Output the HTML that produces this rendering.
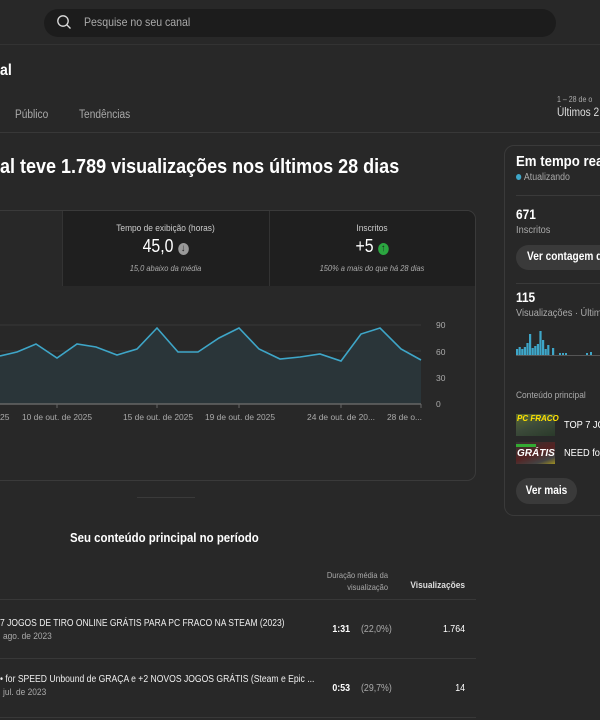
<!DOCTYPE html>
<html><head><meta charset="utf-8"><style>
*{margin:0;padding:0;box-sizing:border-box}
body{width:600px;height:720px;overflow:hidden;background:#282828;font-family:"Liberation Sans",sans-serif;color:#fff;position:relative}
.a{position:absolute;white-space:nowrap}
.g{color:#aaa}
.n{transform:scaleX(.88);transform-origin:left center}
.nc{transform:scaleX(.88);transform-origin:center}
.nr{transform:scaleX(.88);transform-origin:right center}
</style></head><body>
<div class="a" style="left:0;top:0;width:600px;height:45px;background:#282828;border-bottom:1px solid #333"></div>
<div class="a" style="left:44px;top:9px;width:512px;height:28px;border-radius:14px;background:#1c1c1c"></div>
<svg class="a" style="left:56px;top:14px" width="16" height="16" viewBox="0 0 16 16"><circle cx="7" cy="7" r="5.2" fill="none" stroke="#ddd" stroke-width="1.3"/><line x1="11" y1="11" x2="14.5" y2="14.5" stroke="#ddd" stroke-width="1.3"/></svg>
<div class="a g n" style="left:84px;top:15px;font-size:12px">Pesquise no seu canal</div>

<div class="a n" style="left:0;top:62px;font-size:16px;font-weight:bold">al</div>
<div class="a g n" style="left:15px;top:109px;font-size:11.5px">Público</div>
<div class="a g n" style="left:79px;top:109px;font-size:11.5px">Tendências</div>
<div class="a g n" style="left:557px;top:95px;font-size:8px">1 – 28 de o</div>
<div class="a n" style="left:557px;top:107px;font-size:11.5px;color:#ddd">Últimos 2</div>
<div class="a" style="left:0;top:132px;width:600px;height:1px;background:#383838"></div>

<div class="a n" style="left:0;top:156px;font-size:20px;font-weight:bold;transform:scaleX(.90)">al teve 1.789 visualizações nos últimos 28 dias</div>

<div class="a" style="left:-10px;top:210px;width:486px;height:271px;border:1px solid #3a3a3a;border-radius:9px"></div>
<div class="a" style="left:62px;top:211px;width:413px;height:75px;background:#1f1f1f;border-top-right-radius:8px"></div>
<div class="a" style="left:62px;top:211px;width:1px;height:75px;background:#333"></div>
<div class="a" style="left:269px;top:211px;width:1px;height:75px;background:#333"></div>
<div class="a nc" style="left:62px;top:223px;width:207px;text-align:center;font-size:9.5px;color:#ccc">Tempo de exibição (horas)</div>
<div class="a nc" style="left:62px;top:236px;width:207px;text-align:center;font-size:18px">45,0 <span style="display:inline-block;width:12px;height:12px;border-radius:50%;background:#999;color:#1f1f1f;font-size:10px;line-height:12px;vertical-align:1px;font-weight:bold">↓</span></div>
<div class="a nc" style="left:62px;top:263px;width:207px;text-align:center;font-size:8.5px;font-style:italic;color:#aaa">15,0 abaixo da média</div>
<div class="a nc" style="left:269px;top:223px;width:206px;text-align:center;font-size:9.5px;color:#ccc">Inscritos</div>
<div class="a nc" style="left:269px;top:236px;width:206px;text-align:center;font-size:18px">+5 <span style="display:inline-block;width:12px;height:12px;border-radius:50%;background:#2ba640;color:#1f1f1f;font-size:10px;line-height:12px;vertical-align:1px;font-weight:bold">↑</span></div>
<div class="a nc" style="left:269px;top:263px;width:206px;text-align:center;font-size:8.5px;font-style:italic;color:#aaa">150% a mais do que há 28 dias</div>

<svg class="a" style="left:0;top:300px" width="475" height="130" viewBox="0 300 475 130">
<line x1="0" y1="325" x2="421" y2="325" stroke="#383838"/>
<line x1="0" y1="351" x2="421" y2="351" stroke="#383838"/>
<line x1="0" y1="378" x2="421" y2="378" stroke="#383838"/>
<polygon fill="#2a3539" points="0,404 0,356 17,352 36,344 57,358 77,344 96,347 117,355 137,349 157,328 178,352 198,352 219,338 239,328 259,349 280,359 300,357 320,354 341,361 361,334 380,328 401,349 421,360 421,404"/>
<polyline fill="none" stroke="#3ea6c8" stroke-width="1.6" points="0,356 17,352 36,344 57,358 77,344 96,347 117,355 137,349 157,328 178,352 198,352 219,338 239,328 259,349 280,359 300,357 320,354 341,361 361,334 380,328 401,349 421,360"/>
<line x1="0" y1="404" x2="421" y2="404" stroke="#666" stroke-width="1.5"/>
<g stroke="#666"><line x1="57" y1="404" x2="57" y2="408"/><line x1="157" y1="404" x2="157" y2="408"/><line x1="239" y1="404" x2="239" y2="408"/><line x1="341" y1="404" x2="341" y2="408"/><line x1="421" y1="404" x2="421" y2="408"/></g>
<g fill="#aaa" font-size="8.5" font-family="Liberation Sans"><text x="436" y="328">90</text><text x="436" y="355">60</text><text x="436" y="381">30</text><text x="436" y="407">0</text>
<text x="0" y="420">25</text><text x="22" y="420" textLength="70" lengthAdjust="spacingAndGlyphs">10 de out. de 2025</text><text x="123" y="420" textLength="70" lengthAdjust="spacingAndGlyphs">15 de out. de 2025</text><text x="205" y="420" textLength="70" lengthAdjust="spacingAndGlyphs">19 de out. de 2025</text><text x="307" y="420" textLength="68" lengthAdjust="spacingAndGlyphs">24 de out. de 20...</text><text x="387" y="420" textLength="35" lengthAdjust="spacingAndGlyphs">28 de o...</text></g>
</svg>
<div class="a" style="left:137px;top:497px;width:58px;height:1px;background:#3a3a3a"></div>

<div class="a n" style="left:70px;top:530px;font-size:13px;font-weight:bold">Seu conteúdo principal no período</div>
<div class="a g nr" style="left:300px;top:569px;width:88px;text-align:right;font-size:8.5px;line-height:12px;white-space:normal">Duração média da visualização</div>
<div class="a nr" style="left:395px;top:580px;width:70px;text-align:right;font-size:9.5px;font-weight:bold;color:#ddd">Visualizações</div>
<div class="a" style="left:0;top:599px;width:476px;height:1px;background:#383838"></div>
<div class="a n" style="left:0;top:618px;font-size:10px;color:#eee;transform:scaleX(.85)">7 JOGOS DE TIRO ONLINE GRÁTIS PARA PC FRACO NA STEAM (2023)</div>
<div class="a g n" style="left:3px;top:631px;font-size:9.5px">ago. de 2023</div>
<div class="a nr" style="left:300px;top:624px;width:50px;text-align:right;font-size:10px;font-weight:bold">1:31</div>
<div class="a g n" style="left:361px;top:624px;font-size:10px">(22,0%)</div>
<div class="a nr" style="left:400px;top:624px;width:65px;text-align:right;font-size:10px">1.764</div>
<div class="a" style="left:0;top:658px;width:476px;height:1px;background:#383838"></div>
<div class="a n" style="left:0;top:674px;font-size:10px;color:#eee;transform:scaleX(.86)">&#8226; for SPEED Unbound de GRAÇA e +2 NOVOS JOGOS GRÁTIS (Steam e Epic ...</div>
<div class="a g n" style="left:3px;top:687px;font-size:9.5px">jul. de 2023</div>
<div class="a nr" style="left:300px;top:683px;width:50px;text-align:right;font-size:10px;font-weight:bold">0:53</div>
<div class="a g n" style="left:361px;top:683px;font-size:10px">(29,7%)</div>
<div class="a nr" style="left:400px;top:683px;width:65px;text-align:right;font-size:10px">14</div>
<div class="a" style="left:0;top:717px;width:476px;height:1px;background:#383838"></div>

<div class="a" style="left:504px;top:145px;width:120px;height:371px;border:1px solid #3a3a3a;border-radius:10px"></div>
<div class="a n" style="left:516px;top:153px;font-size:15px;font-weight:bold">Em tempo real</div>
<div class="a g n" style="left:516px;top:172px;font-size:10px"><span style="display:inline-block;width:6px;height:6px;border-radius:50%;background:#3ea6c8;margin-right:3px"></span>Atualizando</div>
<div class="a" style="left:516px;top:195px;width:90px;height:1px;background:#3a3a3a"></div>
<div class="a n" style="left:516px;top:207px;font-size:13.5px;font-weight:bold">671</div>
<div class="a g n" style="left:516px;top:224px;font-size:10.5px">Inscritos</div>
<div class="a" style="left:516px;top:245px;width:100px;height:25px;border-radius:13px;background:#3a3a3a"></div>
<div class="a n" style="left:527px;top:251px;font-size:11.5px;font-weight:bold">Ver contagem de</div>
<div class="a" style="left:516px;top:283px;width:90px;height:1px;background:#3a3a3a"></div>
<div class="a n" style="left:516px;top:290px;font-size:13.5px;font-weight:bold">115</div>
<div class="a g n" style="left:516px;top:307px;font-size:10.5px">Visualizações · Últim</div>
<svg class="a" style="left:516px;top:320px" width="84" height="36"><g fill="#3ea6c8">
<rect x="0" y="29" width="2.2" height="6"/><rect x="2.6" y="27" width="2.2" height="8"/><rect x="5.2" y="29" width="2.2" height="6"/><rect x="7.8" y="27" width="2.2" height="8"/><rect x="10.4" y="23" width="2.2" height="12"/><rect x="13" y="14" width="2.2" height="21"/><rect x="15.6" y="28" width="2.2" height="7"/><rect x="18.2" y="26" width="2.2" height="9"/><rect x="20.8" y="24" width="2.2" height="11"/><rect x="23.4" y="11" width="2.2" height="24"/><rect x="26" y="20" width="2.2" height="15"/><rect x="28.6" y="29" width="2.2" height="6"/><rect x="31.2" y="25" width="2.2" height="10"/><rect x="36" y="28" width="2.2" height="7"/><rect x="43" y="33" width="2" height="2"/><rect x="46" y="33" width="2" height="2"/><rect x="49" y="33" width="2" height="2"/><rect x="70" y="33" width="2" height="2"/><rect x="74" y="32" width="2" height="3"/></g><rect x="0" y="35" width="84" height="1" fill="#555"/></svg>
<div class="a g n" style="left:516px;top:390px;font-size:9.5px">Conteúdo principal</div>
<div class="a" style="left:516px;top:414px;width:39px;height:22px;background:linear-gradient(160deg,#5a6a30,#3c4a3a 50%,#2a3a2a)"><div style="font-size:8px;font-weight:bold;font-style:italic;color:#ffe000;padding-left:1px;line-height:9px">PC FRACO</div></div>
<div class="a n" style="left:564px;top:419px;font-size:10.5px">TOP 7 JO</div>
<div class="a" style="left:516px;top:442px;width:39px;height:22px;background:linear-gradient(160deg,#333,#552222 50%,#444 80%,#a09020)"><div style="height:3px;background:#3a3;width:20px;margin-top:2px"></div><div style="font-size:10px;font-weight:bold;font-style:italic;color:#fff;padding:2px 0 0 1px;line-height:10px">GRÁTIS</div></div>
<div class="a n" style="left:564px;top:447px;font-size:10.5px">NEED for</div>
<div class="a" style="left:516px;top:478px;width:61px;height:26px;border-radius:13px;background:#3a3a3a"></div>
<div class="a nc" style="left:516px;top:485px;width:61px;font-size:11.5px;font-weight:bold;text-align:center">Ver mais</div>
</body></html>
